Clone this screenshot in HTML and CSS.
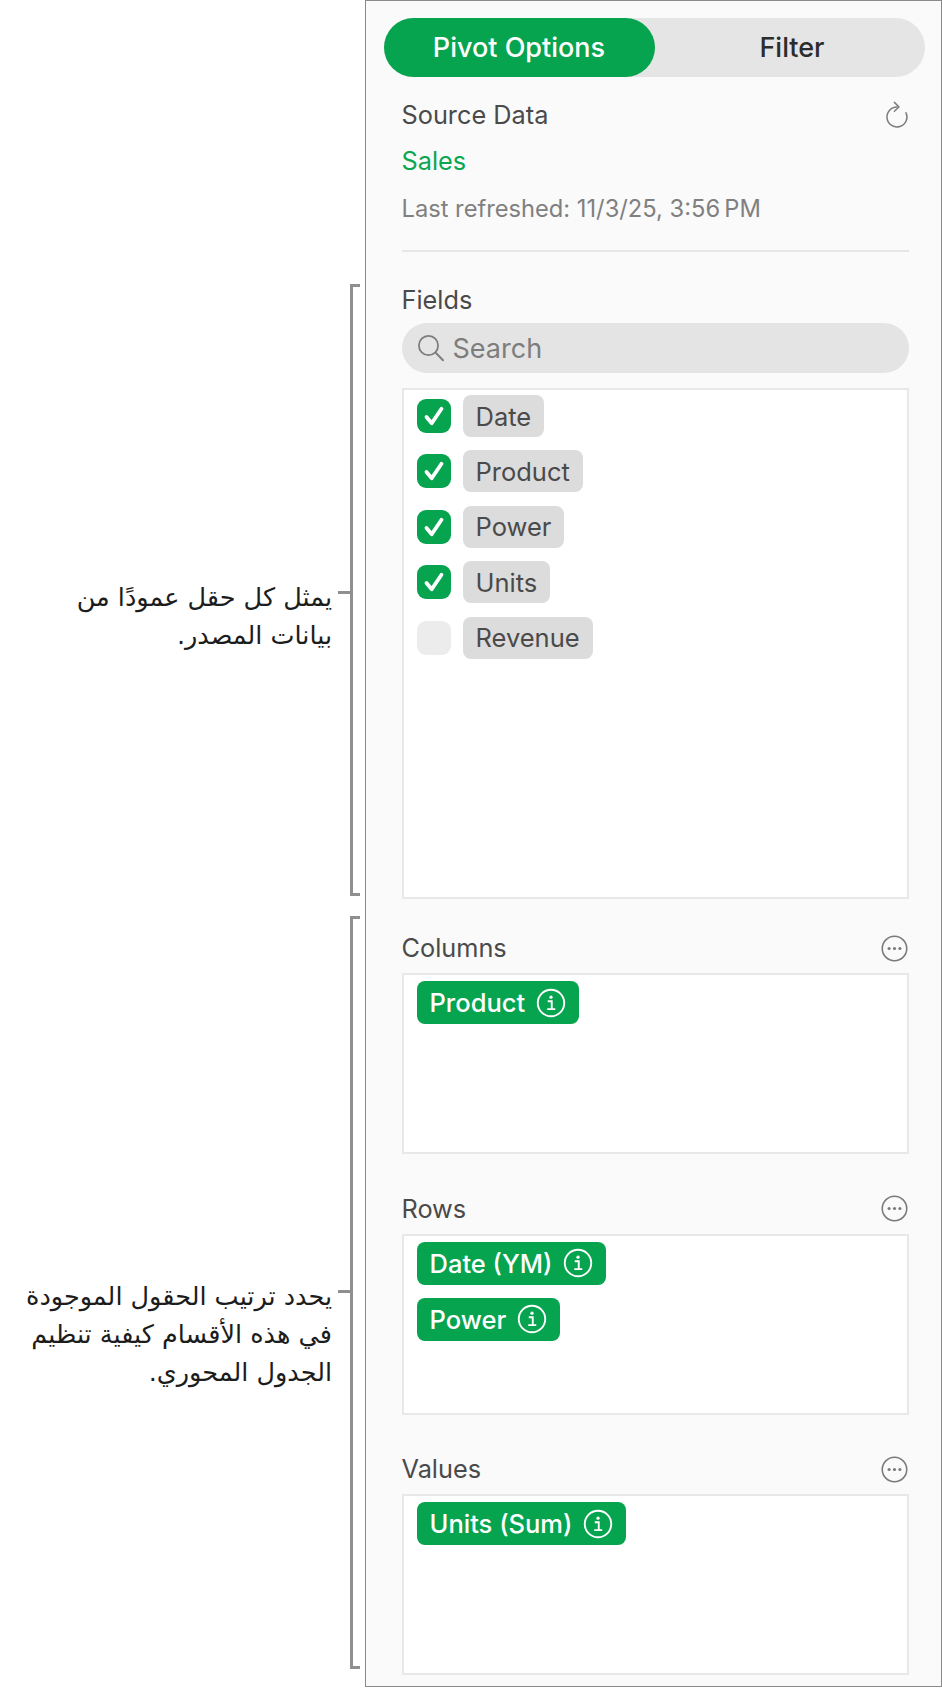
FILE: index.html
```html
<!DOCTYPE html>
<html lang="en">
<head>
    <meta charset="UTF-8">
    <meta name="viewport" content="width=device-width, initial-scale=1.0">
    <title>Pivot Options</title>
    <link rel="stylesheet" href="styles.css">
</head>
<body>

    <!-- Shared icons -->
    <svg class="icon-defs" aria-hidden="true">
        <symbol id="icon-info" viewBox="0 0 24 24">
            <circle cx="12" cy="12" r="10.6" fill="none" stroke="currentColor" stroke-width="1.5"/>
            <path d="M9.4 10.6h3.2v6.2M9 16.9h6.4" fill="none" stroke="currentColor" stroke-width="1.5"/>
            <circle cx="12" cy="7.3" r="1.3" fill="currentColor"/>
        </symbol>
        <symbol id="icon-more" viewBox="0 0 26 26">
            <circle cx="13" cy="13" r="11.8" fill="none" stroke="currentColor" stroke-width="1.5"/>
            <circle cx="7.8" cy="13" r="1.5" fill="currentColor"/>
            <circle cx="13" cy="13" r="1.5" fill="currentColor"/>
            <circle cx="18.2" cy="13" r="1.5" fill="currentColor"/>
        </symbol>
        <symbol id="icon-check" viewBox="0 0 34 34">
            <path d="M9.5 18l5.2 6.2L24.5 9.8" fill="none" stroke="#fff" stroke-width="3.8" stroke-linecap="round" stroke-linejoin="round"/>
        </symbol>
    </svg>

    <div class="page">

        <!-- Callouts on the left -->
        <div class="notes">
            <div class="note note-fields">
                <p class="note-text" lang="ar" dir="rtl">يمثل كل حقل عمودًا من<br>بيانات المصدر.</p>
                <span class="note-tick"></span>
                <span class="note-bracket"></span>
            </div>
            <div class="note note-areas">
                <p class="note-text" lang="ar" dir="rtl">يحدد ترتيب الحقول الموجودة<br>في هذه الأقسام كيفية تنظيم<br>الجدول المحوري.</p>
                <span class="note-tick"></span>
                <span class="note-bracket"></span>
            </div>
        </div>

        <!-- Sidebar panel -->
        <div class="panel">
            <div class="tabs">
                <div class="tab tab-active">Pivot Options</div>
                <div class="tab tab-filter">Filter</div>
            </div>

            <div class="source">
                <div class="section-head">
                    <span class="label">Source Data</span>
                    <svg class="icon-refresh" viewBox="0 0 24 28">
                        <path d="M12 6A10 10 0 1 0 21 11.7" fill="none" stroke="#7c7c7c" stroke-width="1.5" stroke-linecap="round"/>
                        <path d="M9.4 1.4L14 6l-4.6 4.2" fill="none" stroke="#7c7c7c" stroke-width="1.5" stroke-linecap="round" stroke-linejoin="round"/>
                    </svg>
                </div>
                <div class="source-name">Sales</div>
                <div class="source-date">Last refreshed: 11/3/25, 3:56&#8201;PM</div>
            </div>

            <div class="fields">
                <div class="label">Fields</div>
                <div class="search">
                    <svg class="icon-search" viewBox="0 0 28 28">
                        <circle cx="11.5" cy="11.5" r="9.6" fill="none" stroke="#7d7d7d" stroke-width="1.8"/>
                        <path d="M18.6 18.6l7.4 7.6" fill="none" stroke="#7d7d7d" stroke-width="2" stroke-linecap="round"/>
                    </svg>
                    <span>Search</span>
                </div>
                <div class="box box-fields">
                    <div class="field-row">
                        <span class="check check-on"><svg viewBox="0 0 34 34"><use href="#icon-check"/></svg></span>
                        <span class="chip">Date</span>
                    </div>
                    <div class="field-row">
                        <span class="check check-on"><svg viewBox="0 0 34 34"><use href="#icon-check"/></svg></span>
                        <span class="chip">Product</span>
                    </div>
                    <div class="field-row">
                        <span class="check check-on"><svg viewBox="0 0 34 34"><use href="#icon-check"/></svg></span>
                        <span class="chip">Power</span>
                    </div>
                    <div class="field-row">
                        <span class="check check-on"><svg viewBox="0 0 34 34"><use href="#icon-check"/></svg></span>
                        <span class="chip">Units</span>
                    </div>
                    <div class="field-row">
                        <span class="check"></span>
                        <span class="chip">Revenue</span>
                    </div>
                </div>
            </div>

            <div class="area">
                <div class="section-head">
                    <span class="label">Columns</span>
                    <svg class="icon-more"><use href="#icon-more"/></svg>
                </div>
                <div class="box box-area">
                    <span class="pill">Product <svg class="icon-info"><use href="#icon-info"/></svg></span>
                </div>
            </div>

            <div class="area">
                <div class="section-head">
                    <span class="label">Rows</span>
                    <svg class="icon-more"><use href="#icon-more"/></svg>
                </div>
                <div class="box box-area">
                    <span class="pill">Date (YM) <svg class="icon-info"><use href="#icon-info"/></svg></span>
                    <span class="pill">Power <svg class="icon-info"><use href="#icon-info"/></svg></span>
                </div>
            </div>

            <div class="area">
                <div class="section-head">
                    <span class="label">Values</span>
                    <svg class="icon-more"><use href="#icon-more"/></svg>
                </div>
                <div class="box box-area">
                    <span class="pill">Units (Sum) <svg class="icon-info"><use href="#icon-info"/></svg></span>
                </div>
            </div>
        </div>
    </div>

</body>
</html>
```

FILE: styles.css
```css
/* General Styling */
* {
    box-sizing: border-box;
    margin: 0;
    padding: 0;
}

body {
    font-family: Inter, "Noto Sans", sans-serif;
    background: #fff;
    color: #4a4a4a;
}

.icon-defs {
    display: none;
}

.page {
    display: flex;
    width: 942px;
    height: 1689px;
    overflow: hidden;
}

/* Callouts */
.notes {
    width: 365px;
    padding-top: 284px;
    flex-shrink: 0;
}

.note {
    display: flex;
    justify-content: flex-end;
    align-items: flex-start;
    padding-right: 5px;
}

.note-fields {
    height: 612px;
    margin-bottom: 20px;
}

.note-areas {
    height: 753px;
}

.note-text {
    font-family: "DejaVu Sans", sans-serif;
    font-size: 25.5px;
    line-height: 38px;
    color: #1c1c1c;
    text-align: right;
}

.note-fields .note-text {
    margin-top: 294px;
}

.note-areas .note-text {
    margin-top: 361px;
}

.note-tick {
    width: 12px;
    height: 3px;
    margin-left: 6px;
    background: #8f8f8f;
}

.note-fields .note-tick {
    margin-top: 307px;
}

.note-areas .note-tick {
    margin-top: 374px;
}

.note-bracket {
    width: 10px;
    height: 100%;
    border: 3px solid #8f8f8f;
    border-right: none;
}

/* Panel */
.panel {
    width: 577px;
    height: 1687px;
    padding: 17px 34px 0 17.5px;
    background: #fafafa;
    border: 1.5px solid #8a8a8a;
}

.tabs {
    display: flex;
    width: 541px;
    height: 59px;
    background: #e5e5e5;
    border-radius: 30px;
}

.tab {
    display: flex;
    align-items: center;
    justify-content: center;
    flex: 1;
    font-size: 27px;
    font-weight: 500;
    color: #2c2c2c;
}

.tab-active {
    flex: 0 0 271px;
    background: #07a44f;
    border-radius: 30px;
    color: #fff;
}

.tab-filter {
    padding-left: 5px;
}

.source,
.fields,
.area {
    margin-left: 18px;
    width: 507px;
}

.source {
    height: 175px;
    padding-top: 22px;
    border-bottom: 2px solid #e6e6e6;
}

.section-head {
    display: flex;
    align-items: center;
    justify-content: space-between;
    height: 32px;
}

.label {
    font-size: 25.3px;
    line-height: 32px;
    color: #4a4a4a;
}

.icon-refresh {
    width: 24px;
    height: 28px;
}

.source-name {
    margin-top: 14px;
    font-size: 25.3px;
    line-height: 32px;
    color: #0ba650;
}

.source-date {
    margin-top: 17px;
    font-size: 23.7px;
    line-height: 30px;
    color: #808080;
}

/* Fields */
.fields {
    padding-top: 32px;
}

.search {
    display: flex;
    align-items: center;
    gap: 8px;
    height: 50px;
    margin-top: 7px;
    padding-left: 15px;
    background: #e4e4e4;
    border-radius: 25px;
    font-size: 27px;
    color: #7d7d7d;
}

.icon-search {
    width: 28px;
    height: 28px;
}

.box {
    background: #fff;
    border: 2px solid #e8e8e8;
}

.box-fields {
    display: flex;
    flex-direction: column;
    gap: 13.4px;
    height: 511px;
    margin-top: 15px;
    padding: 5px 0 0 13px;
}

.field-row {
    display: flex;
    align-items: center;
    gap: 12px;
    height: 42px;
}

.check {
    width: 34px;
    height: 34px;
    background: #ececec;
    border-radius: 9px;
}

.check svg {
    display: block;
    width: 34px;
    height: 34px;
}

.check-on {
    background: #07a44f;
}

.chip {
    display: flex;
    align-items: center;
    height: 42px;
    padding: 0 13px;
    background: #dcdcdc;
    border-radius: 8px;
    font-size: 25.5px;
    color: #4a4a4a;
}

/* Columns, Rows, Values */
.area {
    padding-top: 27px;
}

.area + .area {
    padding-top: 32.5px;
}

.area .section-head {
    height: 44px;
}

.icon-more {
    width: 27px;
    height: 27px;
    margin-right: 1px;
    color: #7a7a7a;
}

.box-area {
    display: flex;
    flex-direction: column;
    align-items: flex-start;
    gap: 13px;
    height: 181px;
    margin-top: 3px;
    padding: 6px 0 0 13px;
}

.pill {
    display: flex;
    align-items: center;
    gap: 11px;
    height: 43px;
    padding: 0 13px;
    background: #07a44f;
    border-radius: 8px;
    font-size: 25.5px;
    font-weight: 500;
    color: #fff;
}

.icon-info {
    width: 30px;
    height: 30px;
}
```
